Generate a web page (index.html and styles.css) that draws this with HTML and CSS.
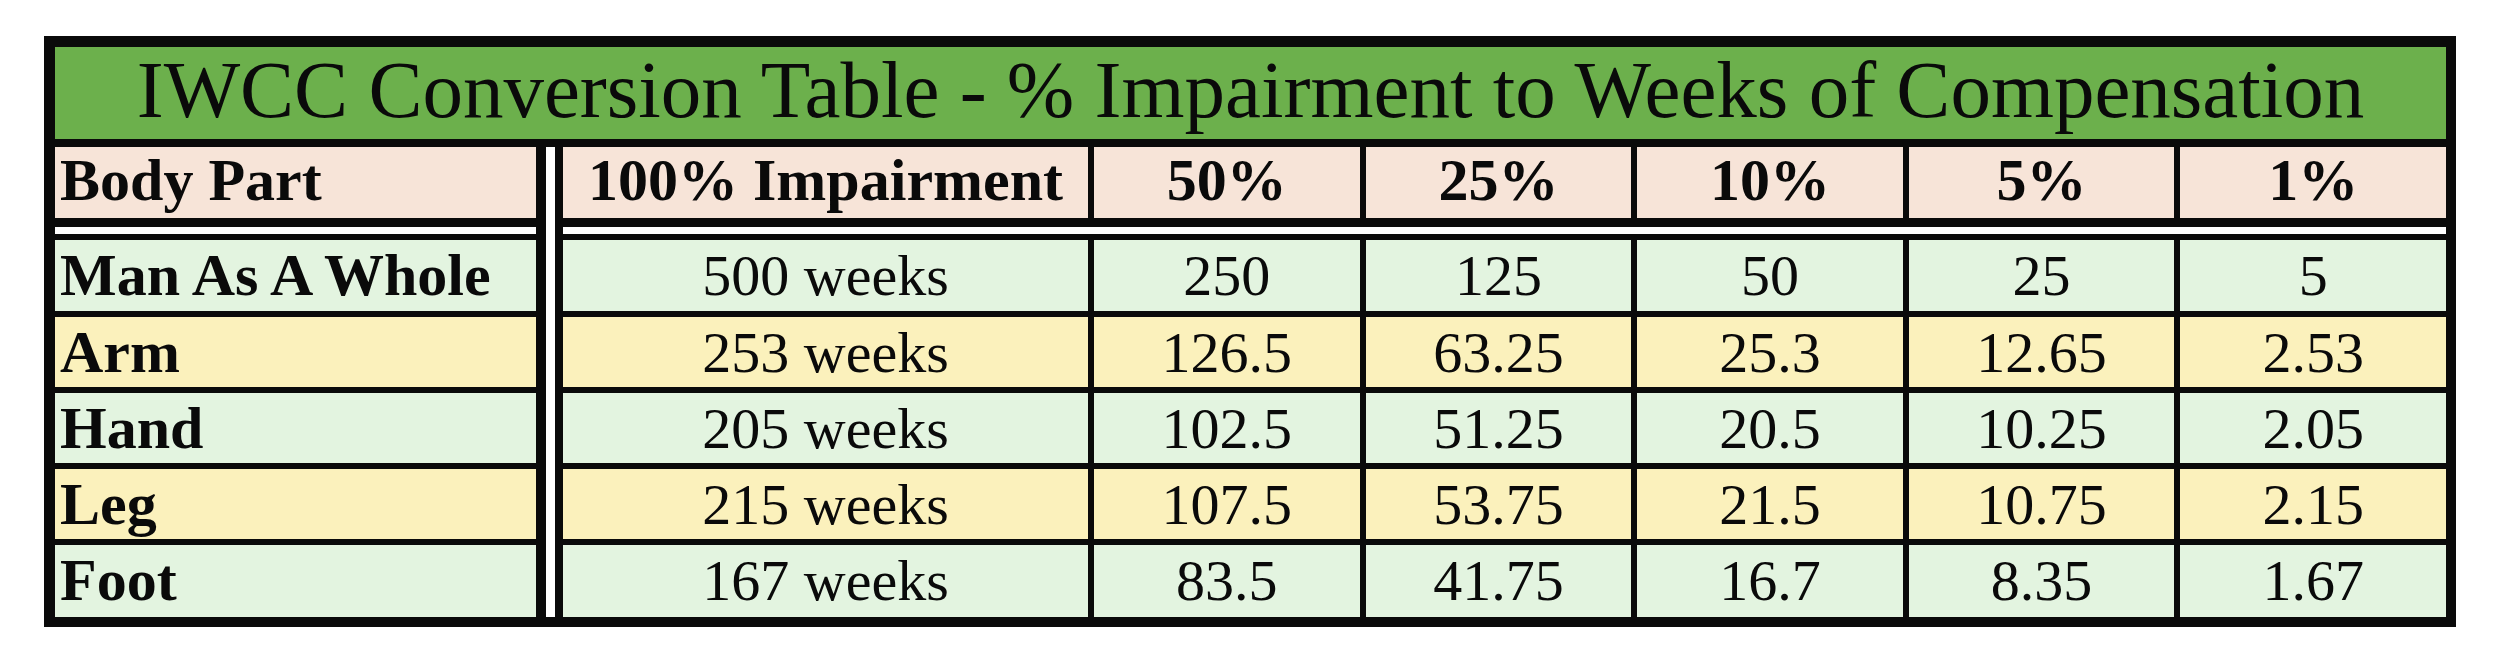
FILE: index.html
```
<!DOCTYPE html>
<html>
<head>
<meta charset="utf-8">
<link rel="stylesheet" href="styles.css">
</head>
<body>
<div class="sheet">
  <div class="title">IWCC Conversion Table - % Impairment to Weeks of Compensation</div>
  <div class="grid">
    <div class="vsep"></div>

    <div class="cell head label">Body Part</div>
    <div class="cell head c2">100% Impairment</div>
    <div class="cell head">50%</div>
    <div class="cell head">25%</div>
    <div class="cell head">10%</div>
    <div class="cell head">5%</div>
    <div class="cell head">1%</div>

    <div class="hsep left"></div>
    <div class="hsep right"></div>

    <div class="cell green label">Man As A Whole</div>
    <div class="cell green c2">500 weeks</div>
    <div class="cell green">250</div>
    <div class="cell green">125</div>
    <div class="cell green">50</div>
    <div class="cell green">25</div>
    <div class="cell green">5</div>

    <div class="cell yellow label">Arm</div>
    <div class="cell yellow c2">253 weeks</div>
    <div class="cell yellow">126.5</div>
    <div class="cell yellow">63.25</div>
    <div class="cell yellow">25.3</div>
    <div class="cell yellow">12.65</div>
    <div class="cell yellow">2.53</div>

    <div class="cell green label">Hand</div>
    <div class="cell green c2">205 weeks</div>
    <div class="cell green">102.5</div>
    <div class="cell green">51.25</div>
    <div class="cell green">20.5</div>
    <div class="cell green">10.25</div>
    <div class="cell green">2.05</div>

    <div class="cell yellow label">Leg</div>
    <div class="cell yellow c2">215 weeks</div>
    <div class="cell yellow">107.5</div>
    <div class="cell yellow">53.75</div>
    <div class="cell yellow">21.5</div>
    <div class="cell yellow">10.75</div>
    <div class="cell yellow">2.15</div>

    <div class="cell green label">Foot</div>
    <div class="cell green c2">167 weeks</div>
    <div class="cell green">83.5</div>
    <div class="cell green">41.75</div>
    <div class="cell green">16.7</div>
    <div class="cell green">8.35</div>
    <div class="cell green">1.67</div>
  </div>
</div>
</body>
</html>
```
FILE: styles.css
```
html, body {
  margin: 0;
  padding: 0;
  background: #ffffff;
}

body {
  font-family: "Liberation Serif", "Times New Roman", serif;
  color: #0a0a0a;
  padding-top: 36px;
  padding-left: 44px;
}

.sheet {
  box-sizing: border-box;
  width: 2412px;
  background: #0a0a0a;
  border-style: solid;
  border-color: #0a0a0a;
  border-width: 11px 10px 10px 11px;
}

.title {
  height: 92px;
  line-height: 86px;
  background: #6cb04c;
  text-align: center;
  font-size: 81px;
  font-weight: normal;
  border-bottom: 8px solid #0a0a0a;
  white-space: nowrap;
}

.grid {
  display: grid;
  grid-template-columns: 481px 15px 525px repeat(5, 1fr);
  grid-template-rows: 71px 10px 71px 70px 70px 70px 72px;
  column-gap: 6px;
  row-gap: 6px;
  background: #0a0a0a;
}

.vsep {
  grid-column: 2;
  grid-row: 1 / -1;
  background: #ffffff;
  border-left: 4px solid #0a0a0a;
  border-right: 2px solid #0a0a0a;
}

.hsep {
  grid-row: 2;
  background: #ffffff;
  border-top: 3px solid #0a0a0a;
}

.hsep.left {
  grid-column: 1;
}

.hsep.right {
  grid-column: 3 / -1;
}

.cell {
  text-align: center;
  font-size: 58px;
  line-height: 71px;
  white-space: nowrap;
  overflow: hidden;
}

.cell.label {
  grid-column: 1;
  text-align: left;
  padding-left: 5px;
  font-weight: bold;
  font-size: 60px;
}

.cell.c2 {
  grid-column: 3;
}

.cell.head {
  background: #f7e4d8;
  font-weight: bold;
  font-size: 60px;
  line-height: 66px;
}

.green {
  background: #e3f4e0;
}

.yellow {
  background: #fbf1bc;
}
```
